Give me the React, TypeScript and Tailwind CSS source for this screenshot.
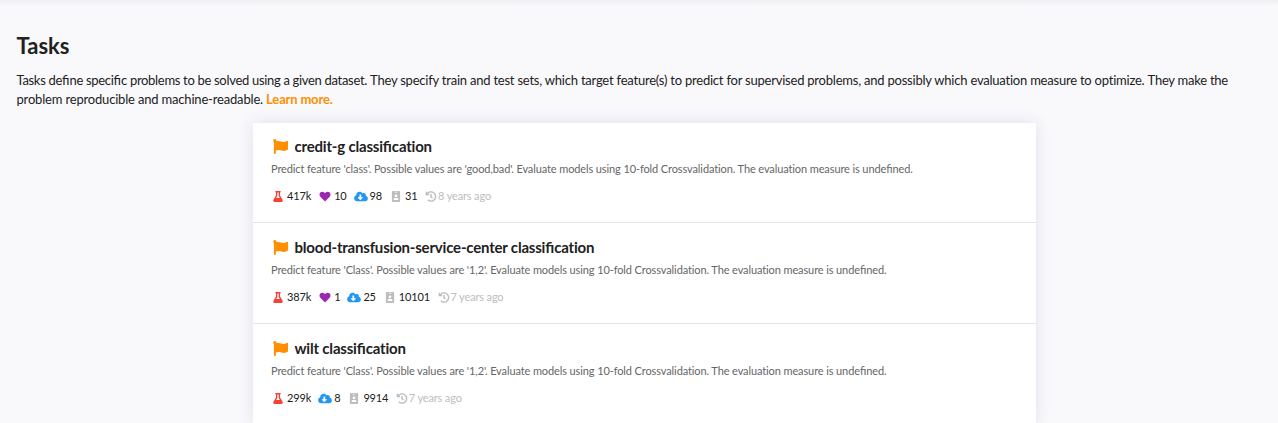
import { FaFlag, FaFlask, FaHeart, FaCloudDownloadAlt, FaHistory } from "react-icons/fa";

type Task = { name: string; cls: string; values: string; runs: string; likes?: string; downloads: string; id: string; age: string };

const tasks: Task[] = [
  { name: "credit-g classification", cls: "class", values: "good,bad", runs: "417k", likes: "10", downloads: "98", id: "31", age: "8 years ago" },
  { name: "blood-transfusion-service-center classification", cls: "Class", values: "1,2", runs: "387k", likes: "1", downloads: "25", id: "10101", age: "7 years ago" },
  { name: "wilt classification", cls: "Class", values: "1,2", runs: "299k", downloads: "8", id: "9914", age: "7 years ago" },
];

// Joins only the "fi" pairs; other ligatures stay off in tracked text.
function Ligated({ text }: { text: string }) {
  return (
    <>
      {text.split(/(fi)/).map((part, i) =>
        part === "fi" ? <span key={i} className="tracking-[0px]">fi</span> : part
      )}
    </>
  );
}

function IdBadge() {
  return (
    <svg viewBox="0 0 384 512" className="h-[11px] w-[14px] shrink-0 text-[#bdbdbd]" fill="currentColor">
      <path fillRule="evenodd" d="M336 0H48C21.500 0 0 21.500 0 48v416c0 26.500 21.500 48 48 48h288c26.500 0 48-21.500 48-48V48c0-26.500-21.500-48-48-48zM144 32h96c8.800 0 16 7.200 16 16s-7.200 16-16 16h-96c-8.800 0-16-7.200-16-16s7.200-16 16-16zm48 128c35.300 0 64 28.700 64 64s-28.700 64-64 64-64-28.700-64-64 28.700-64 64-64zm112 236.800c0 10.600-10 19.200-22.400 19.200H102.400C90 416 80 407.400 80 396.800v-19.200c0-31.800 30.100-57.600 67.200-57.600h5c12.300 5.100 25.700 8 39.800 8s27.600-2.900 39.800-8h5c37.100 0 67.200 25.800 67.200 57.600v19.200z" />
    </svg>
  );
}

function TaskRow({ task }: { task: Task }) {
  return (
    <li className="h-[101px] border-b border-[#e5e5e8] pt-[14px] pl-[18px] first:h-[100px] first:pt-[13px]">
      <h2 className="flex h-5 items-center text-[15px] font-bold tracking-[-0.195px] text-[#212121]">
        <FaFlag className="mr-[7px] ml-[1.500px] h-[15px] w-[15px] text-[#ff8f00]" />
        <span><Ligated text={task.name} /></span>
      </h2>
      <p className="mt-[5px] h-4 text-[11px] leading-4 tracking-[-0.11px] text-[#666666]">
        <Ligated text={`Predict feature '${task.cls}'. Possible values are '${task.values}'. Evaluate models using 10-fold Crossvalidation. The evaluation measure is undefined.`} />
      </p>
      <div className="mt-[11px] flex h-4 items-center text-[11px] tracking-[-0.15px] text-[#212121]">
        <FaFlask className="mr-[2px] h-[11px] w-[14px] text-[#f44336]" />
        <span className="mr-[7px]">{task.runs}</span>
        {task.likes && <FaHeart className="mr-[2px] h-[11px] w-[14px] text-[#9c27b0]" />}
        {task.likes && <span className="mr-[7px]">{task.likes}</span>}
        <FaCloudDownloadAlt className="mr-[2px] h-[11px] w-[14px] text-[#2196f3]" />
        <span className="mr-[7px]">{task.downloads}</span>
        <IdBadge />
        <span className="mr-[6.500px] ml-[2px]">{task.id}</span>
        <FaHistory className="h-[11px] w-[14px] text-[#bdbdbd]" />
        <span className="text-[#bdbdbd]">{task.age}</span>
      </div>
    </li>
  );
}

export default function App() {
  return (
    <main className="h-[423px] overflow-hidden bg-[#f9f9fc] font-['Lato',sans-serif] text-[#212121]">
      <div className="h-[6px] bg-linear-to-b from-[#efeff4] to-[#f9f9fc]" />
      <header className="px-[16.500px] pt-[25.500px]">
        <h1 className="h-[27px] text-[22px] leading-[27px] font-bold">Tasks</h1>
        <p className="mt-[12.500px] text-[13px] leading-[19px]">
          <span className="tracking-[-0.31px]">
            <Ligated text="Tasks define specific problems to be solved using a given dataset. " />
          </span>
          <span className="tracking-[-0.22px]">
            <Ligated text="They specify train and test sets, which target feature(s) to predict for supervised problems, and possibly which evaluation measure to optimize. " />
          </span>
          <span className="tracking-[-0.25px]">They make the </span>
          <span className="tracking-[-0.18px]">problem reproducible and machine-readable. </span>
          <a className="font-bold tracking-[-0.17px] text-[#ff8f00]">Learn more.</a>
        </p>
      </header>
      <ul className="mt-[14px] ml-[253px] w-[783px] bg-white shadow-[0_0_14px_rgba(53,64,110,0.13)]">
        {tasks.map((task) => <TaskRow key={task.name} task={task} />)}
      </ul>
    </main>
  );
}
